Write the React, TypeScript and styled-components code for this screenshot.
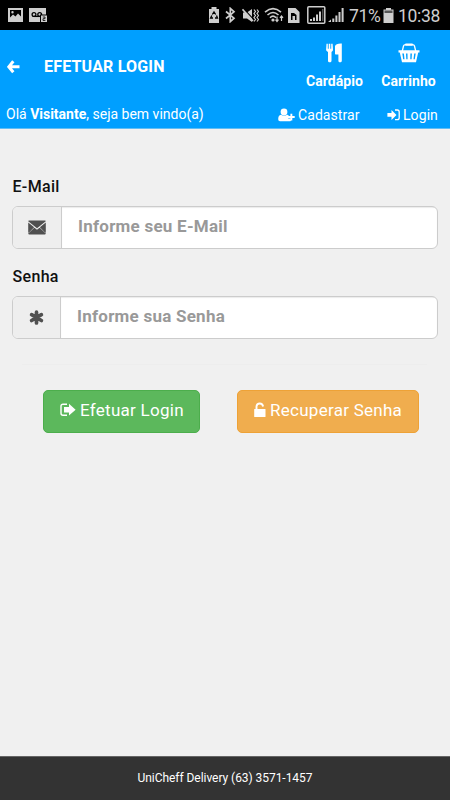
import React from "react";
import styled, { createGlobalStyle } from "styled-components";

const GlobalStyle = createGlobalStyle`
  *, *::before, *::after { box-sizing: border-box; }
  body { margin: 0; font-family: Roboto, "Liberation Sans", sans-serif; background: #f0f0f0; }
`;

const Screen = styled.div`
  width: 450px;
  height: 800px;
  display: flex;
  flex-direction: column;
  overflow: hidden;
  background: #f0f0f0;
`;

const StatusBar = styled.div`
  height: 30px;
  flex: none;
  display: flex;
  align-items: center;
  background: #000;
  color: #cecece;
  padding: 0 9px 0 8px;
`;

const StatusText = styled.span<{ $width: number; $gap: number }>`
  width: ${(p) => p.$width}px;
  margin-left: ${(p) => p.$gap}px;
  font-size: 17.5px;
  letter-spacing: -0.3px;
  line-height: 30px;
  white-space: nowrap;
  padding-top: 1px;
`;

const Glyph = styled.svg<{ $gap?: number }>`
  display: block;
  flex: none;
  fill: currentColor;
  margin-left: ${(p) => p.$gap ?? 0}px;
`;

const Header = styled.header`
  height: 99px;
  flex: none;
  display: flex;
  flex-direction: column;
  background: #009fff;
  color: #fff;
  border-bottom: 1px solid #5fbdf5;
`;

const TitleRow = styled.div`
  height: 69px;
  display: flex;
  align-items: flex-start;
  padding-left: 7px;
`;

const BackButton = styled.a`
  display: flex;
  width: 37px;
  padding-top: 30px;
`;

const Title = styled.h1`
  margin: 0;
  flex: 1;
  font-size: 16px;
  font-weight: 700;
  letter-spacing: 0.18px;
  line-height: 20px;
  padding-top: 27px;
  white-space: nowrap;
`;

const MenuItem = styled.a<{ $width: number }>`
  width: ${(p) => p.$width}px;
  display: flex;
  flex-direction: column;
  align-items: center;
  padding-top: 13px;
  gap: 8px;
  font-size: 14px;
  font-weight: 700;
  letter-spacing: 0.05px;
  line-height: 20px;
  white-space: nowrap;
`;

const Menu = styled.nav`
  display: flex;
  gap: 17px;
  padding-right: 13.500px;
`;

const UserRow = styled.div`
  height: 29px;
  display: flex;
  align-items: flex-start;
  padding: 5px 12px 0 6px;
  font-size: 14px;
  line-height: 20px;
  white-space: nowrap;
`;

const Greeting = styled.div`
  flex: 1;
`;

const UserLink = styled.a<{ $width: number; $gap: number }>`
  width: ${(p) => p.$width}px;
  display: flex;
  align-items: center;
  gap: ${(p) => p.$gap}px;
  padding-top: 1px;
  letter-spacing: 0.08px;
`;

const Form = styled.main`
  flex: 1;
  display: flex;
  flex-direction: column;
  padding: 48px 12px 0;
`;

const Label = styled.label`
  font-size: 16px;
  font-weight: 500;
  letter-spacing: 0.33px;
  line-height: 20px;
  height: 29px;
  padding-left: 0.5px;
  color: #111;
`;

const InputGroup = styled.div`
  width: 426px;
  height: 43px;
  margin-bottom: 18px;
  display: flex;
  border: 1.5px solid #ccc;
  border-radius: 6px;
  background: #fff;
  overflow: hidden;
`;

const Addon = styled.div<{ $width: number }>`
  width: ${(p) => p.$width}px;
  flex: none;
  display: flex;
  align-items: center;
  justify-content: center;
  background: #eee;
  color: #505050;
  border-right: 1px solid #ccc;
`;

const Input = styled.input`
  flex: 1;
  min-width: 0;
  border: 0;
  outline: 0;
  background: transparent;
  padding: 0 15px 3px 16px;
  font: 700 17px Roboto, "Liberation Sans", sans-serif;
  letter-spacing: 0.24px;
  box-shadow: inset 0 1px 1px rgba(0, 0, 0, 0.08);
  &::placeholder { color: #999; opacity: 1; }
`;

const Divider = styled.hr`
  width: 405px;
  height: 1px;
  margin: 7px 0 25px 10px;
  border: 0;
  background: #ededed;
`;

const Actions = styled.div`
  display: flex;
  gap: 37px;
  padding-left: 31px;
`;

const Button = styled.button<{ $tone: "success" | "warning" }>`
  width: ${(p) => (p.$tone === "success" ? 157 : 182)}px;
  height: 43px;
  padding: 0 0 3px 16px;
  display: flex;
  align-items: center;
  gap: 4px;
  border: 1px solid ${(p) => (p.$tone === "success" ? "#4cae4c" : "#eea236")};
  border-radius: 5px;
  background: ${(p) => (p.$tone === "success" ? "#5cb85c" : "#f0ad4e")};
  color: #fff;
  font: 400 17px Roboto, "Liberation Sans", sans-serif;
  letter-spacing: 0.27px;
  white-space: nowrap;
`;

const Footer = styled.footer`
  height: 44px;
  flex: none;
  display: flex;
  align-items: center;
  justify-content: center;
  background: #333;
  border-top: 1px solid #666;
  color: #fff;
  font-size: 12px;
  letter-spacing: -0.05px;
  padding-bottom: 2px;
`;

const ImageIcon = () => (
  <Glyph width="15" height="14" viewBox="0 0 15 14">
    <path fillRule="evenodd" d="M0 0h15v14H0zM2 2v7.500l3-3 2.500 2L10 5.500l3 3V2zM4.500 3a1.200 1.200 0 1 1 0 2.400 1.200 1.200 0 0 1 0-2.400z" />
  </Glyph>
);

const VoicemailIcon = () => (
  <Glyph $gap={6} width="18" height="14" viewBox="0 0 18 14">
    <path d="M0 0h17v14H0z" />
    <g fill="none" stroke="#000" strokeWidth="1.300">
      <circle cx="5" cy="6.500" r="1.900" />
      <circle cx="10.700" cy="6.500" r="1.900" />
      <path d="M5 8.400h7.500" />
    </g>
    <path d="M11 6.500h7V14h-7z" fill="#000" />
    <path d="M12 7.500h6V14h-6z" />
    <path d="M13.800 9h2.200v1.700h-2v1.800h2.400" fill="none" stroke="#000" strokeWidth=".8" />
  </Glyph>
);

const RecycleBatteryIcon = () => (
  <Glyph $gap={161} width="12" height="16" viewBox="0 0 12 16">
    <path d="M3.500 0h5v2H11v14H1V2h2.500z" />
    <path d="M4.300 7.500 6 5l1.700 2.500M8.500 8.500l1 2.500H7M5 11H2.600l1.200-2.500" fill="none" stroke="#000" strokeWidth="1.300" />
  </Glyph>
);

const BluetoothIcon = () => (
  <Glyph $gap={5} width="11" height="16" viewBox="0 0 11 16">
    <path d="M1 4.500 9 11.200 5.300 14.600V1.400L9 4.800 1 11.500" fill="none" stroke="currentColor" strokeWidth="1.700" />
  </Glyph>
);

const MutedIcon = () => (
  <Glyph $gap={6} width="17" height="15" viewBox="0 0 17 15">
    <path d="M1 4.500h4L10 1v13L5 10.500H1z" />
    <path d="M1.300.3 12.500 12.300" stroke="#000" strokeWidth="1.200" />
    <path d="M.5 1.300 11 13" stroke="currentColor" strokeWidth="1.600" />
    <path d="m12 1.500 1.500 2L12 5.500l1.500 2L12 9.500l1.500 2L12 13.500M15 1.500l1.500 2-1.500 2 1.500 2-1.500 2 1.500 2-1.500 2" fill="none" stroke="currentColor" strokeWidth="1.200" />
  </Glyph>
);

const WifiIcon = () => (
  <Glyph $gap={5} width="20" height="16" viewBox="0 0 20 16">
    <g fill="none" stroke="currentColor" strokeWidth="1.600">
      <path d="M1 5.200q8-7 16 0M3.500 8q5.500-5 11 0M6 10.700q3-3 6 0" />
      <path d="M13 9.500v5m-1.500-1.800 1.500 1.800 1.500-1.800M17.500 14V9m-1.500 1.800L17.500 9 19 10.800" strokeWidth="1.200" />
    </g>
    <circle cx="9" cy="13" r="1.600" />
  </Glyph>
);

const SimIcon = () => (
  <Glyph $gap={3} width="13" height="15" viewBox="0 0 13 15">
    <path fillRule="evenodd" d="M1 0h7.500L12.500 4v11H1zM4 5v7h1.500V8h2.500v4h1.500V7L7 5z" />
  </Glyph>
);

const BoxedSignalIcon = () => (
  <Glyph $gap={7} width="19" height="18" viewBox="0 0 19 18">
    <rect x=".8" y=".8" width="17" height="16.400" rx="1" fill="none" stroke="currentColor" strokeWidth="1.500" />
    <path d="M3 13h2v2H3zM6 11.500h2V15H6zM9 8.500h2V15H9zM12 5.500h2V15h-2z" />
    <path d="M15 3h1.500v12H15z" opacity=".4" />
  </Glyph>
);

const SignalIcon = () => (
  <Glyph $gap={2} width="16" height="16" viewBox="0 0 16 16">
    <path d="M0 15 3 12.500V15zM4.300 11.500h2V15h-2zM7.400 8.500h2V15h-2zM10.500 5h2v10h-2zM13.600 1h2v14h-2z" />
  </Glyph>
);

const BatteryIcon = () => (
  <Glyph $gap={3} width="11" height="15" viewBox="0 0 11 15">
    <path d="M3 0h5v1.500h2.500V15H.5V1.500H3z" />
    <path d="M1.500 2.500h8V5h-8z" fill="#555" />
  </Glyph>
);

const BackIcon = () => (
  <Glyph width="13" height="14" viewBox="0 0 13 14">
    <path d="M6.300 1.300 1.800 6.800l4.500 5.500M2 6.800h10.500" fill="none" stroke="currentColor" strokeWidth="3" />
  </Glyph>
);

const CutleryIcon = () => (
  <Glyph width="17" height="20" viewBox="0 0 17 20">
    <path d="M.5.700h1.300v5h.9v-5H4.300v5h.9v-5h1.400l.4 6.100c0 1.100-.8 1.700-1.500 2.200v8.800c0 2-3.500 2-3.500 0V9C1.200 8.500.1 7.900.1 6.800zM9 3.200C9.500 1.200 12 .400 15.800.600v17.200c0 2-3.400 2-3.400 0v-6.200H10c-.7 0-1-.3-1-1z" />
  </Glyph>
);

const BasketIcon = () => (
  <Glyph width="22" height="20" viewBox="0 0 22 20">
    <path d="M4.200 8.500 5.500 3Q5.900 1.700 7.500 1.700h7Q16.100 1.700 16.500 3l1.300 5.500" fill="none" stroke="currentColor" strokeWidth="1.300" />
    <rect x="7" y=".5" width="8" height="2.300" rx="1" />
    <path fillRule="evenodd" d="M.500 7.300h21v2.300h-1.300l-2.200 9.700H4L1.800 9.600H.500zM4.300 10.500l.9 5.700h1.300l-.6-5.700zM8 10.500l.3 5.700h1.300l-.1-5.700zM12.400 10.500l-.1 5.700h1.300l.3-5.700zM16.200 10.500l-.7 5.700h1.300l.9-5.700z" />
  </Glyph>
);

const UserPlusIcon = () => (
  <Glyph width="17" height="14" viewBox="0 0 17 14">
    <circle cx="6" cy="4" r="3.400" />
    <path d="M3 6.800C4.700 8.200 7.300 8.200 9 6.800c1 .1 1.500.4 2 .900h-.8v2.800h2.700v2.200q-.5.600-1.400.600H2Q.2 13.300.2 11.200.200 7.200 3 6.800z" />
    <path d="M12.400 5.700h1.900v2.400h2.400V10h-2.400v2.400h-1.900V10H10V8.100h2.400z" />
  </Glyph>
);

const SignInIcon = () => (
  <Glyph width="13" height="12" viewBox="0 0 13 12">
    <path d="m4.500.900 5 5-5 5V7.800H.400V4h4.100z" />
    <path d="M8 1h2.200q2 0 2 2v5.700q0 2-2 2H8" fill="none" stroke="currentColor" strokeWidth="1.300" />
  </Glyph>
);

const EnvelopeIcon = () => (
  <Glyph width="18" height="15" viewBox="0 0 18 15">
    <path d="M1 .5h16q.8 0 .8.800L9 8.300.200 1.300Q.2.500 1 .500zM.2 2.500l5.600 4.600L.2 12.400zM17.800 2.500v9.900l-5.600-5.300zM6.400 7.700 9 9.800l2.600-2.100 6.200 5.900q0 .8-.8.800H1q-.8 0-.8-.8z" />
    <path d="M.5 12.600 6 7.300M17.500 12.600 12 7.300" stroke="currentColor" strokeWidth="1" />
  </Glyph>
);

const AsteriskIcon = () => (
  <Glyph width="15" height="16" viewBox="0 0 15 16">
    <path d="M7.500 2.200v10.800M2.600 4.700l9.800 5.800M12.400 4.700l-9.800 5.800" fill="none" stroke="currentColor" strokeWidth="3.700" strokeLinecap="round" />
  </Glyph>
);

const LogOutIcon = () => (
  <Glyph width="16" height="14" viewBox="0 0 16 14">
    <path d="M7 1.300H3Q1 1.300 1 3.300v6.900q0 2 2 2h4" fill="none" stroke="currentColor" strokeWidth="1.400" />
    <path d="M9 .8 15.600 6.700 9 12.600V9.400H4V4.100h5z" />
  </Glyph>
);

const UnlockIcon = () => (
  <Glyph width="12" height="16" viewBox="0 0 12 16">
    <path d="M2.500 8V4.500Q2.700 1.500 5.800 1.500q2.800 0 3.300 3" fill="none" stroke="currentColor" strokeWidth="1.900" />
    <rect x=".2" y="7" width="11.300" height="8" rx=".5" />
  </Glyph>
);

export default function App() {
  return (
    <Screen>
      <GlobalStyle />
      <StatusBar>
        <ImageIcon />
        <VoicemailIcon />
        <RecycleBatteryIcon />
        <BluetoothIcon />
        <MutedIcon />
        <WifiIcon />
        <SimIcon />
        <BoxedSignalIcon />
        <SignalIcon />
        <StatusText $width={31} $gap={5}>71%</StatusText>
        <BatteryIcon />
        <StatusText $width={43} $gap={4}>10:38</StatusText>
      </StatusBar>
      <Header>
        <TitleRow>
          <BackButton aria-label="Voltar"><BackIcon /></BackButton>
          <Title>EFETUAR LOGIN</Title>
          <Menu>
            <MenuItem $width={58}><CutleryIcon />Cardápio</MenuItem>
            <MenuItem $width={56}><BasketIcon />Carrinho</MenuItem>
          </Menu>
        </TitleRow>
        <UserRow>
          <Greeting>Olá <b>Visitante</b>, seja bem vindo(a)</Greeting>
          <UserLink $width={109} $gap={3}><UserPlusIcon />Cadastrar</UserLink>
          <UserLink $width={51} $gap={3}><SignInIcon />Login</UserLink>
        </UserRow>
      </Header>
      <Form>
        <Label htmlFor="email">E-Mail</Label>
        <InputGroup>
          <Addon $width={49}><EnvelopeIcon /></Addon>
          <Input id="email" type="email" placeholder="Informe seu E-Mail" />
        </InputGroup>
        <Label htmlFor="password">Senha</Label>
        <InputGroup>
          <Addon $width={48}><AsteriskIcon /></Addon>
          <Input id="password" type="password" placeholder="Informe sua Senha" />
        </InputGroup>
        <Divider />
        <Actions>
          <Button $tone="success"><LogOutIcon />Efetuar Login</Button>
          <Button $tone="warning"><UnlockIcon />Recuperar Senha</Button>
        </Actions>
      </Form>
      <Footer>UniCheff Delivery (63) 3571-1457</Footer>
    </Screen>
  );
}
